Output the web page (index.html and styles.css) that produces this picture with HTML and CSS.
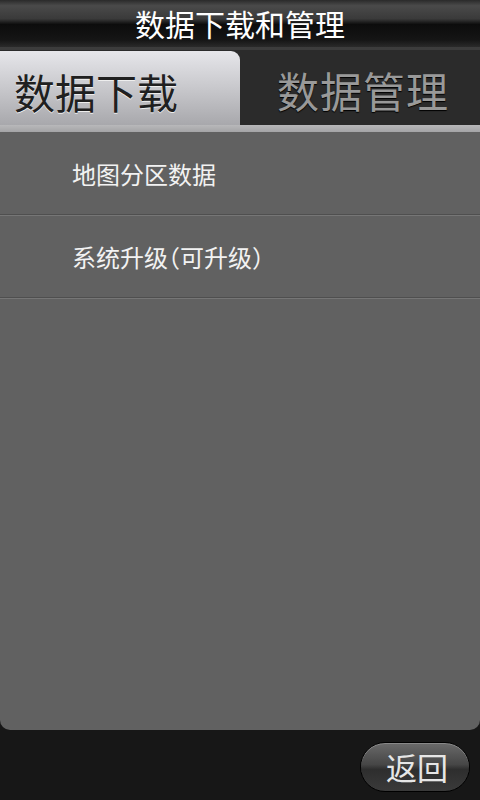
FILE: index.html
```html
<!DOCTYPE html>
<html lang="zh-CN">
<head>
  <meta charset="UTF-8" />
  <meta name="viewport" content="width=device-width, initial-scale=1.0"/>
  <title>数据下载和管理</title>
  <link rel="stylesheet" href="styles.css">
</head>
<body>

  <div class="screen">
    <div class="title-bar">数据下载和管理</div>

    <div class="tabs">
      <div class="tab active">数据下载</div>
      <div class="tab">数据管理</div>
    </div>
    <div class="tab-strip"></div>

    <div class="panel">
      <div class="list-item">地图分区数据</div>
      <div class="list-item">系统升级（可升级）</div>
    </div>

    <div class="footer">
      <button class="back-btn">返回</button>
    </div>
  </div>

</body>
</html>
```

FILE: styles.css
```css
body {
  margin: 0;
  background: #171717;
  font-family: "Noto Sans CJK SC", "Noto Sans", sans-serif;
}

.screen {
  width: 480px;
  height: 800px;
  display: flex;
  flex-direction: column;
  background: #171717;
}

.title-bar {
  height: 47px;
  line-height: 47px;
  text-align: center;
  color: #fff;
  font-size: 30px;
  background: linear-gradient(#2a2a2a 0%, #4a4a4a 12%, #3a3a3a 40%, #0c0c0c 52%, #151515 85%, #2a2a2a 100%);
  border-bottom: 3px solid #3c3c3c;
}

.tabs {
  display: flex;
  height: 75px;
  background: #2b2b2b;
}

.tab {
  flex: 1;
  padding-left: 37px;
  color: #999;
  font-size: 42px;
  line-height: 80px;
  letter-spacing: 1px;
  text-shadow: 0 1px 1px #000;
}

.tab.active {
  flex: none;
  width: 226px;
  padding-left: 14px;
  font-size: 41px;
  letter-spacing: 0;
  color: #202020;
  margin-top: 1px;
  border-top-right-radius: 9px;
  background: linear-gradient(#e6e6ea, #c8c8cc 50%, #a8a8ac);
  text-shadow: 0 1px 0 #eee;
}

.tab-strip {
  height: 7px;
  background: linear-gradient(#b8b8ba, #a4a4a6);
}

.panel {
  height: 598px;
  background: #616161;
  border-radius: 0 0 10px 10px;
}

.list-item {
  height: 82px;
  line-height: 84px;
  padding-left: 72px;
  color: #f2f2f2;
  font-size: 24px;
  font-feature-settings: "halt";
  border-bottom: 1px solid #4f4f4f;
  box-shadow: 0 1px 0 #767676;
}

.footer {
  flex: 1;
  display: flex;
  justify-content: flex-end;
  align-items: center;
  padding-right: 10px;
}

.back-btn {
  width: 110px;
  height: 50px;
  border-radius: 25px;
  border: 1px solid #000;
  color: #e6e6e6;
  font-family: inherit;
  font-size: 31px;
  padding: 0 0 0 4px;
  background: linear-gradient(#6a6a6a, #464646 45%, #2e2e2e 55%, #3a3a3a);
  box-shadow: inset 0 1px 0 #888;
  margin-top: 3px;
}
```
